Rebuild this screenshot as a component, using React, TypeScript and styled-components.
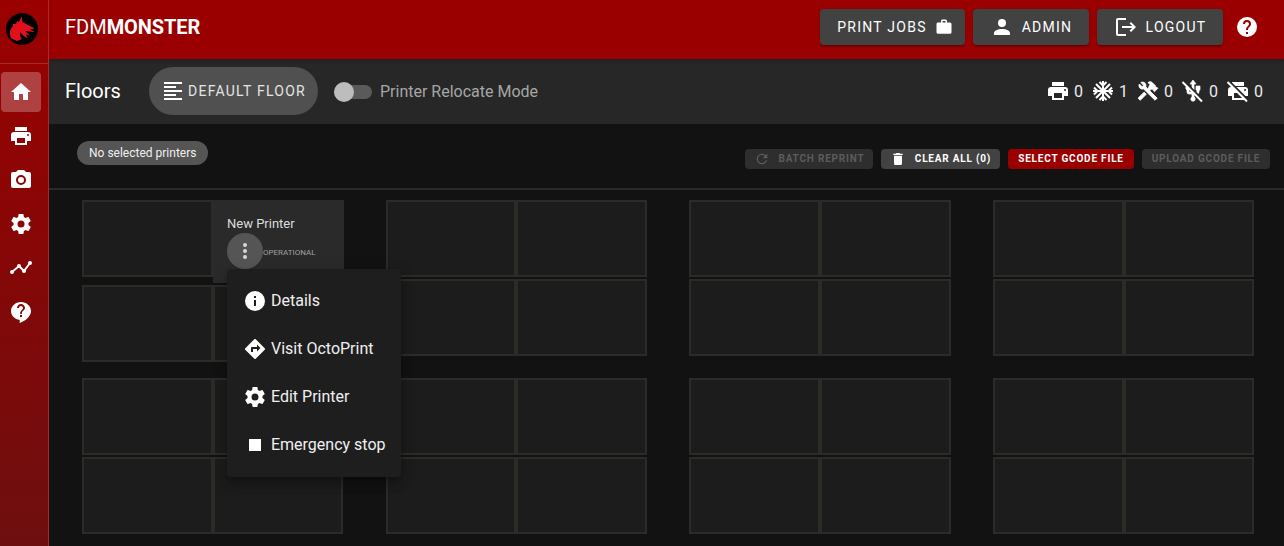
import * as React from "react";
import styled, { createGlobalStyle } from "styled-components";

const PATHS = {
  home: "M10,20V14H14V20H19V12H22L12,3L2,12H5V20H10Z",
  printer:
    "M18,3H6V7H18M19,12A1,1 0 0,1 18,11A1,1 0 0,1 19,10A1,1 0 0,1 20,11A1,1 0 0,1 19,12M16,19H8V14H16M19,8H5A3,3 0 0,0 2,11V17H6V21H18V17H22V11A3,3 0 0,0 19,8Z",
  camera:
    "M4,4H7L9,2H15L17,4H20A2,2 0 0,1 22,6V18A2,2 0 0,1 20,20H4A2,2 0 0,1 2,18V6A2,2 0 0,1 4,4M12,7A5,5 0 0,0 7,12A5,5 0 0,0 12,17A5,5 0 0,0 17,12A5,5 0 0,0 12,7M12,9A3,3 0 0,1 15,12A3,3 0 0,1 12,15A3,3 0 0,1 9,12A3,3 0 0,1 12,9Z",
  cog: "M12,15.5A3.5,3.5 0 0,1 8.5,12A3.5,3.5 0 0,1 12,8.5A3.5,3.5 0 0,1 15.5,12A3.5,3.5 0 0,1 12,15.5M19.43,12.97C19.47,12.65 19.5,12.33 19.5,12C19.5,11.67 19.47,11.34 19.43,11L21.54,9.37C21.73,9.22 21.78,8.95 21.66,8.73L19.66,5.27C19.54,5.05 19.27,4.96 19.05,5.05L16.56,6.05C16.04,5.66 15.5,5.32 14.87,5.07L14.5,2.42C14.46,2.18 14.25,2 14,2H10C9.75,2 9.54,2.18 9.5,2.42L9.13,5.07C8.5,5.32 7.96,5.66 7.44,6.05L4.95,5.05C4.73,4.96 4.46,5.05 4.34,5.27L2.34,8.73C2.21,8.95 2.27,9.22 2.46,9.37L4.57,11C4.53,11.34 4.5,11.67 4.5,12C4.5,12.33 4.53,12.65 4.57,12.97L2.46,14.63C2.27,14.78 2.21,15.05 2.34,15.27L4.34,18.73C4.46,18.95 4.73,19.03 4.95,18.95L7.44,17.94C7.96,18.34 8.5,18.68 9.13,18.93L9.5,21.58C9.54,21.82 9.75,22 10,22H14C14.25,22 14.46,21.82 14.5,21.58L14.87,18.93C15.5,18.67 16.04,18.34 16.56,17.94L19.05,18.95C19.27,19.03 19.54,18.95 19.66,18.73L21.66,15.27C21.78,15.05 21.73,14.78 21.54,14.63L19.43,12.97Z",
  chatHelp:
    "M12,2C6.5,2 2,6 2,11C2,15.6 5.8,19.3 10.7,19.9V23C15,21.5 22,17 22,11C22,6 17.5,2 12,2M13,17H11V15H13V17M14.6,10.4L13.7,11.3C13,12 12.9,12.6 12.9,14H11.1V13.5C11.1,12.4 11.5,11.4 12.2,10.7L13.4,9.4C13.8,9.1 14,8.6 14,8C14,6.9 13.1,6 12,6C10.9,6 10,6.9 10,8H8C8,5.8 9.8,4 12,4C14.2,4 16,5.8 16,8C16,8.9 15.2,9.8 14.6,10.4Z",
  helpCircle:
    "M15.07,11.25L14.17,12.17C13.45,12.89 13,13.5 13,15H11V14.5C11,13.39 11.45,12.39 12.17,11.67L13.41,10.41C13.78,10.05 14,9.55 14,9C14,7.89 13.1,7 12,7A2,2 0 0,0 10,9H8A4,4 0 0,1 12,5A4,4 0 0,1 16,9C16,9.88 15.64,10.67 15.07,11.25M13,19H11V17H13M12,2A10,10 0 0,0 2,12A10,10 0 0,0 12,22A10,10 0 0,0 22,12C22,6.47 17.5,2 12,2Z",
  briefcase:
    "M10,2H14A2,2 0 0,1 16,4V6H20A2,2 0 0,1 22,8V19A2,2 0 0,1 20,21H4C2.89,21 2,20.1 2,19V8C2,6.89 2.89,6 4,6H8V4C8,2.89 8.89,2 10,2M14,6V4H10V6H14Z",
  account:
    "M12,4A4,4 0 0,1 16,8A4,4 0 0,1 12,12A4,4 0 0,1 8,8A4,4 0 0,1 12,4M12,14C16.42,14 20,15.79 20,18V20H4V18C4,15.79 7.58,14 12,14Z",
  logout:
    "M17 7L15.59 8.41L18.17 11H8V13H18.17L15.59 15.58L17 17L22 12M4 5H12V3H4C2.9 3 2 3.9 2 5V19C2 20.1 2.9 21 4 21H12V19H4V5Z",
  alignLeft: "M3,3H21V5H3V3M3,7H15V9H3V7M3,11H21V13H3V11M3,15H15V17H3V15M3,19H21V21H3V19Z",
  usb: "M15,7V11H16V13H13V5H15L12,1L9,5H11V13H8V10.93C8.7,10.56 9.2,9.85 9.2,9C9.2,7.78 8.21,6.8 7,6.8C5.78,6.8 4.8,7.78 4.8,9C4.8,9.85 5.3,10.56 6,10.93V13A2,2 0 0,0 8,15H11V18.05C10.29,18.41 9.8,19.15 9.8,20A2.2,2.2 0 0,0 12,22.2A2.2,2.2 0 0,0 14.2,20C14.2,19.15 13.71,18.41 13,18.05V15H16A2,2 0 0,0 18,13V11H19V7H15Z",
  information:
    "M13,9H11V7H13M13,17H11V11H13M12,2A10,10 0 0,0 2,12A10,10 0 0,0 12,22A10,10 0 0,0 22,12A10,10 0 0,0 12,2Z",
  directions:
    "M14,14.5V12H10V15H8V11A1,1 0 0,1 9,10H14V7.5L17.5,11M21.71,11.29L12.71,2.29H12.7C12.31,1.9 11.68,1.9 11.29,2.29L2.29,11.29C1.9,11.68 1.9,12.31 2.29,12.71L11.29,21.71C11.68,22.1 12.32,22.1 12.71,21.71L21.71,12.71C22.1,12.32 22.1,11.69 21.71,11.29Z",
  stop: "M18,18H6V6H18V18Z",
  dots: "M12,16A2,2 0 0,1 14,18A2,2 0 0,1 12,20A2,2 0 0,1 10,18A2,2 0 0,1 12,16M12,10A2,2 0 0,1 14,12A2,2 0 0,1 12,14A2,2 0 0,1 10,12A2,2 0 0,1 12,10M12,4A2,2 0 0,1 14,6A2,2 0 0,1 12,8A2,2 0 0,1 10,6A2,2 0 0,1 12,4Z",
  refresh:
    "M17.65,6.35C16.2,4.9 14.21,4 12,4A8,8 0 0,0 4,12A8,8 0 0,0 12,20C15.73,20 18.84,17.45 19.73,14H17.65C16.83,16.33 14.61,18 12,18A6,6 0 0,1 6,12A6,6 0 0,1 12,6C13.66,6 15.14,6.69 16.22,7.78L13,11H20V4L17.65,6.35Z",
  trash: "M19,4H15.5L14.5,3H9.5L8.5,4H5V6H19M6,19A2,2 0 0,0 8,21H16A2,2 0 0,0 18,19V7H6V19Z",
};

const HAMMER_WRENCH =
  "M13.78 15.3L19.78 21.3L21.89 19.14L15.89 13.14L13.78 15.3M17.5 10.1C17.11 10.1 16.69 10.05 16.36 9.91L4.97 21.25L2.86 19.14L10.27 11.74L8.5 9.96L7.78 10.66L6.33 9.25V12.11L5.63 12.81L2.11 9.25L2.81 8.55H5.62L4.22 7.14L7.78 3.58C8.95 2.41 10.83 2.41 12 3.58L9.89 5.74L11.3 7.14L10.59 7.85L12.38 9.63L14.2 7.75C14.06 7.42 14 7 14 6.63C14 4.66 15.56 3.11 17.5 3.11C18.09 3.11 18.61 3.25 19.08 3.53L16.41 6.2L17.91 7.7L20.58 5.03C20.86 5.5 21 6 21 6.63C21 8.55 19.45 10.1 17.5 10.1Z";

type IconName = keyof typeof PATHS;

const Icon = ({
  name,
  size = 24,
  slashed,
  bold,
}: {
  name: IconName;
  size?: number;
  slashed?: boolean;
  bold?: boolean;
}): JSX.Element => (
  <svg width={size} height={size} viewBox="0 0 24 24" fill="currentColor">
    <path d={PATHS[name]} stroke={bold ? "currentColor" : "none"} strokeWidth="0.7" />
    {slashed && (
      <>
        <path d="M3 2L23 22" stroke="#272727" strokeWidth="2" />
        <path d="M1.5 3L21 22.5" stroke="currentColor" strokeWidth="2" />
      </>
    )}
  </svg>
);

const SnowflakeIcon = (): JSX.Element => (
  <svg width="24" height="24" viewBox="0 0 24 24" fill="none" stroke="currentColor" strokeWidth="2">
    <path d="M12 2V22M2 12H22M5 5L19 19M19 5L5 19" />
    <path d="M8.5 3L12 6.5L15.5 3M8.5 21L12 17.5L15.5 21M3 8.5L6.5 12L3 15.5M21 8.5L17.5 12L21 15.5" />
  </svg>
);

const HammerWrenchIcon = (): JSX.Element => (
  <svg width="24" height="24" viewBox="0 0 24 24" fill="currentColor" stroke="currentColor" strokeWidth="0.9">
    <path d={HAMMER_WRENCH} transform="translate(24 0) scale(-1 1)" />
  </svg>
);

const TimelineIcon = (): JSX.Element => (
  <svg width="24" height="24" viewBox="0 0 24 24" fill="currentColor" stroke="currentColor" strokeWidth="2">
    <path d="M3 16L10 10L15 15L21 7" fill="none" />
    <circle cx="3" cy="16" r="1" />
    <circle cx="10" cy="10" r="1" />
    <circle cx="15" cy="15" r="1" />
    <circle cx="21" cy="7" r="1" />
  </svg>
);

const Logo = (): JSX.Element => (
  <svg width="32" height="32" viewBox="0 0 32 32">
    <circle cx="16" cy="16" r="16" fill="#000" />
    <path
      fill="#e0101c"
      d="M5 25C3 20 4 16 7 13L7 11L10 11L11 8L13 9L15.5 3.5L16.5 9L22 12L29 15.5L24 16.5L29 19L23 18.5L19 18L24 22.5L20 21.5L21.5 25.5L16.5 22L14 19L14 23L16 26L11 28C9 27 6 26 5 25Z"
    />
  </svg>
);

const App = (): JSX.Element => {
  const floorGroups = Array.from({ length: 8 }, (_, i) => i);
  const menuItems: { icon: IconName; label: string }[] = [
    { icon: "information", label: "Details" },
    { icon: "directions", label: "Visit OctoPrint" },
    { icon: "cog", label: "Edit Printer" },
    { icon: "stop", label: "Emergency stop" },
  ];

  return (
    <Page>
      <GlobalStyle />
      <Sidebar>
        <LogoBox>
          <Logo />
        </LogoBox>
        <Nav>
          <NavItem $active>
            <Icon name="home" />
          </NavItem>
          <NavItem>
            <Icon name="printer" />
          </NavItem>
          <NavItem>
            <Icon name="camera" />
          </NavItem>
          <NavItem>
            <Icon name="cog" />
          </NavItem>
          <NavItem>
            <TimelineIcon />
          </NavItem>
          <NavItem>
            <Icon name="chatHelp" />
          </NavItem>
        </Nav>
      </Sidebar>

      <Content>
        <TopBar>
          <Title>
            FDM<strong>MONSTER</strong>
          </Title>
          <TopActions>
            <TopButton $width={145} $insetLeft={5}>
              PRINT JOBS
              <Icon name="briefcase" size={18} />
            </TopButton>
            <TopButton $width={116}>
              <Icon name="account" />
              <span>ADMIN</span>
            </TopButton>
            <TopButton $width={126}>
              <Icon name="logout" />
              <span>LOGOUT</span>
            </TopButton>
            <HelpButton>
              <Icon name="helpCircle" />
            </HelpButton>
          </TopActions>
        </TopBar>

        <SubBar>
          <FloorsTitle>Floors</FloorsTitle>
          <FloorChip>
            <Icon name="alignLeft" />
            DEFAULT FLOOR
          </FloorChip>
          <Switch>
            <SwitchTrack />
            <SwitchThumb />
          </Switch>
          <SwitchLabel>Printer Relocate Mode</SwitchLabel>
          <Stats>
            <Stat>
              <Icon name="printer" />0
            </Stat>
            <Stat>
              <SnowflakeIcon />1
            </Stat>
            <Stat>
              <HammerWrenchIcon />0
            </Stat>
            <Stat>
              <Icon name="usb" bold slashed />0
            </Stat>
            <Stat>
              <Icon name="printer" slashed />0
            </Stat>
          </Stats>
        </SubBar>

        <ActionPanel>
          <SelectionChip>No selected printers</SelectionChip>
          <ActionButtons>
            <ActionButton $variant="disabled" $width={128}>
              <Icon name="refresh" size={16} />
              BATCH REPRINT
            </ActionButton>
            <ActionButton $variant="default" $width={119}>
              <Icon name="trash" size={16} />
              CLEAR ALL (0)
            </ActionButton>
            <ActionButton $variant="primary" $width={126}>
              SELECT GCODE FILE
            </ActionButton>
            <ActionButton $variant="disabled" $width={128}>
              UPLOAD GCODE FILE
            </ActionButton>
          </ActionButtons>
        </ActionPanel>

        <FloorGrid>
          {floorGroups.map((group) => (
            <Group key={group}>
              {[0, 1, 2, 3].map((slot) =>
                group === 0 && slot === 1 ? (
                  <PrinterCard key={slot}>
                    <PrinterName>New Printer</PrinterName>
                    <PrinterRow>
                      <DotsButton>
                        <Icon name="dots" />
                      </DotsButton>
                      <PrinterStatus>OPERATIONAL</PrinterStatus>
                    </PrinterRow>
                    <Menu>
                      {menuItems.map((item) => (
                        <MenuItem key={item.label}>
                          <Icon name={item.icon} />
                          <MenuLabel>{item.label}</MenuLabel>
                        </MenuItem>
                      ))}
                    </Menu>
                  </PrinterCard>
                ) : (
                  <Cell key={slot} />
                )
              )}
            </Group>
          ))}
        </FloorGrid>
      </Content>
    </Page>
  );
};

export default App;

const GlobalStyle = createGlobalStyle`
  html, body {
    margin: 0;
    height: 100%;
    background: #121212;
    overflow: hidden;
  }

  body {
    font-family: Roboto, "Liberation Sans", sans-serif;
    color: #fff;
  }

  svg {
    display: block;
    flex-shrink: 0;
  }
`;

const Page = styled.div`
  display: flex;
  width: 1284px;
  height: 546px;
  overflow: hidden;
`;

const Sidebar = styled.aside`
  position: relative;
  z-index: 2;
  width: 48px;
  flex-shrink: 0;
  border-right: 1px solid #a82a2a;
  background: linear-gradient(180deg, #9b0000 0%, #6e0f0f 100%);
`;

const LogoBox = styled.div`
  display: flex;
  justify-content: center;
  height: 32px;
  padding: 13px 6px 18px 2px;
  border-bottom: 1px solid #a82a2a;
`;

const Nav = styled.nav`
  display: flex;
  flex-direction: column;
  gap: 4px;
  padding: 8px 7px 0 1px;
`;

const NavItem = styled.div<{ $active?: boolean }>`
  display: flex;
  align-items: center;
  justify-content: center;
  height: 40px;
  border-radius: 4px;
  background: ${(p) => (p.$active ? "rgba(255, 255, 255, 0.25)" : "transparent")};
`;

const Content = styled.main`
  flex: 1;
  min-width: 0;
  display: flex;
  flex-direction: column;
`;

const TopBar = styled.header`
  position: relative;
  z-index: 1;
  height: 59px;
  flex-shrink: 0;
  display: flex;
  align-items: flex-start;
  justify-content: space-between;
  padding: 0 25px 0 16px;
  box-sizing: border-box;
  background: #9b0000;
  box-shadow: 0 2px 4px -1px rgba(0, 0, 0, 0.2), 0 1px 3px rgba(0, 0, 0, 0.12);
`;

const Title = styled.div`
  font-size: 20px;
  line-height: 54px;

  strong {
    font-weight: 700;
    letter-spacing: -0.1px;
  }
`;

const TopActions = styled.div`
  display: flex;
  align-items: center;
  gap: 8px;
  padding-top: 9px;
`;

const TopButton = styled.div<{ $width: number; $insetLeft?: number }>`
  width: ${(p) => p.$width}px;
  height: 36px;
  box-sizing: border-box;
  padding-left: ${(p) => p.$insetLeft ?? 0}px;
  display: flex;
  align-items: center;
  justify-content: center;
  gap: 8px;
  border-radius: 4px;
  background: #424242;
  box-shadow: 0 3px 1px -2px rgba(0, 0, 0, 0.2), 0 2px 2px rgba(0, 0, 0, 0.14),
    0 1px 5px rgba(0, 0, 0, 0.12);
  font-size: 14px;
  font-weight: 400;
  letter-spacing: 1.25px;
`;

const HelpButton = styled.div`
  margin-left: 4px;
  width: 24px;
  height: 24px;
`;

const SubBar = styled.section`
  height: 65px;
  flex-shrink: 0;
  display: flex;
  align-items: center;
  padding: 0 21px 1px 16px;
  box-sizing: border-box;
  background: #272727;
`;

const FloorsTitle = styled.div`
  width: 84px;
  font-size: 20px;
`;

const FloorChip = styled.div`
  width: 169px;
  height: 48px;
  display: flex;
  align-items: center;
  justify-content: center;
  gap: 3px;
  border-radius: 24px;
  background: #505050;
  font-size: 14px;
  font-weight: 400;
  letter-spacing: 1.25px;
  color: #e4e4e4;

  svg {
    color: #fff;
  }
`;

const Switch = styled.div`
  position: relative;
  width: 38px;
  height: 20px;
  margin-left: 16px;
  margin-top: 1px;
`;

const SwitchTrack = styled.div`
  position: absolute;
  top: 3px;
  left: 0;
  width: 38px;
  height: 14px;
  border-radius: 7px;
  background: #5a5a5a;
`;

const SwitchThumb = styled.div`
  position: absolute;
  top: 0;
  left: 0;
  width: 20px;
  height: 20px;
  border-radius: 50%;
  background: #bdbdbd;
`;

const SwitchLabel = styled.div`
  margin-left: 8px;
  font-size: 16px;
  color: #a6a6a6;
`;

const Stats = styled.div`
  margin-left: auto;
  display: flex;
  align-items: center;
  gap: 8px;
`;

const Stat = styled.div`
  display: flex;
  align-items: center;
  gap: 4px;
  font-size: 16px;
  color: #ececec;

  svg {
    color: #fff;
  }
`;

const ActionPanel = styled.section`
  height: 66px;
  flex-shrink: 0;
  box-sizing: border-box;
  display: flex;
  align-items: flex-start;
  justify-content: space-between;
  padding: 17px 14px 0 28px;
  border-bottom: 2px solid #2a2a2a;
`;

const SelectionChip = styled.div`
  height: 24px;
  padding: 0 12px;
  display: flex;
  align-items: center;
  border-radius: 12px;
  background: #555;
  font-size: 12px;
  color: #f0f0f0;
`;

const ActionButtons = styled.div`
  display: flex;
  gap: 8px;
  padding-top: 8px;
`;

const actionColors = {
  disabled: { bg: "#2e2e2e", fg: "#5c5c5c" },
  default: { bg: "#424242", fg: "#fff" },
  primary: { bg: "#9b0000", fg: "#fff" },
};

const ActionButton = styled.div<{ $variant: keyof typeof actionColors; $width: number }>`
  width: ${(p) => p.$width}px;
  height: 20px;
  box-sizing: border-box;
  padding-bottom: 1px;
  display: flex;
  align-items: center;
  justify-content: center;
  gap: 9px;
  border-radius: 4px;
  background: ${(p) => actionColors[p.$variant].bg};
  color: ${(p) => actionColors[p.$variant].fg};
  font-size: 10px;
  font-weight: 700;
  letter-spacing: 0.8px;
`;

const FloorGrid = styled.section`
  display: grid;
  grid-template-columns: repeat(4, 261.33px);
  grid-auto-rows: 178px;
  column-gap: 42.34px;
  padding: 10px 0 0 33px;
`;

const Group = styled.div`
  display: grid;
  grid-template-columns: repeat(2, 130.67px);
  align-content: start;
  align-items: start;
  row-gap: 2px;
`;

const Cell = styled.div`
  height: 77px;
  box-sizing: border-box;
  border: 2px solid #2b2b27;
  background: #1c1c1c;
`;

const PrinterCard = styled.div`
  position: relative;
  width: 131px;
  height: 83px;
  margin-left: 0.33px;
  box-sizing: border-box;
  padding: 16px 14px 0;
  background: #2a2a2a;
`;

const PrinterName = styled.div`
  font-size: 13px;
  line-height: 15px;
  color: #dcdcdc;
`;

const PrinterRow = styled.div`
  display: flex;
  align-items: center;
  margin-top: 2px;
`;

const DotsButton = styled.div`
  width: 36px;
  height: 36px;
  display: flex;
  align-items: center;
  justify-content: center;
  border-radius: 50%;
  background: #555;
  color: #d8d8d8;
`;

const PrinterStatus = styled.div`
  font-size: 8px;
  margin-top: 2px;
  color: #a0a0a0;
`;

const Menu = styled.div`
  position: absolute;
  z-index: 2;
  top: 69px;
  left: 14px;
  width: 174px;
  padding: 8px 0;
  border-radius: 4px;
  background: #1e1e1e;
  box-shadow: 0 5px 5px -3px rgba(0, 0, 0, 0.2), 0 8px 10px 1px rgba(0, 0, 0, 0.14),
    0 3px 14px 2px rgba(0, 0, 0, 0.12);
`;

const MenuItem = styled.div`
  height: 48px;
  display: flex;
  align-items: center;
  gap: 4px;
  padding-left: 16px;
  font-size: 16px;
  color: #f0f0f0;

  svg {
    color: #fff;
  }
`;

const MenuLabel = styled.span`
  margin-bottom: 2px;
`;
